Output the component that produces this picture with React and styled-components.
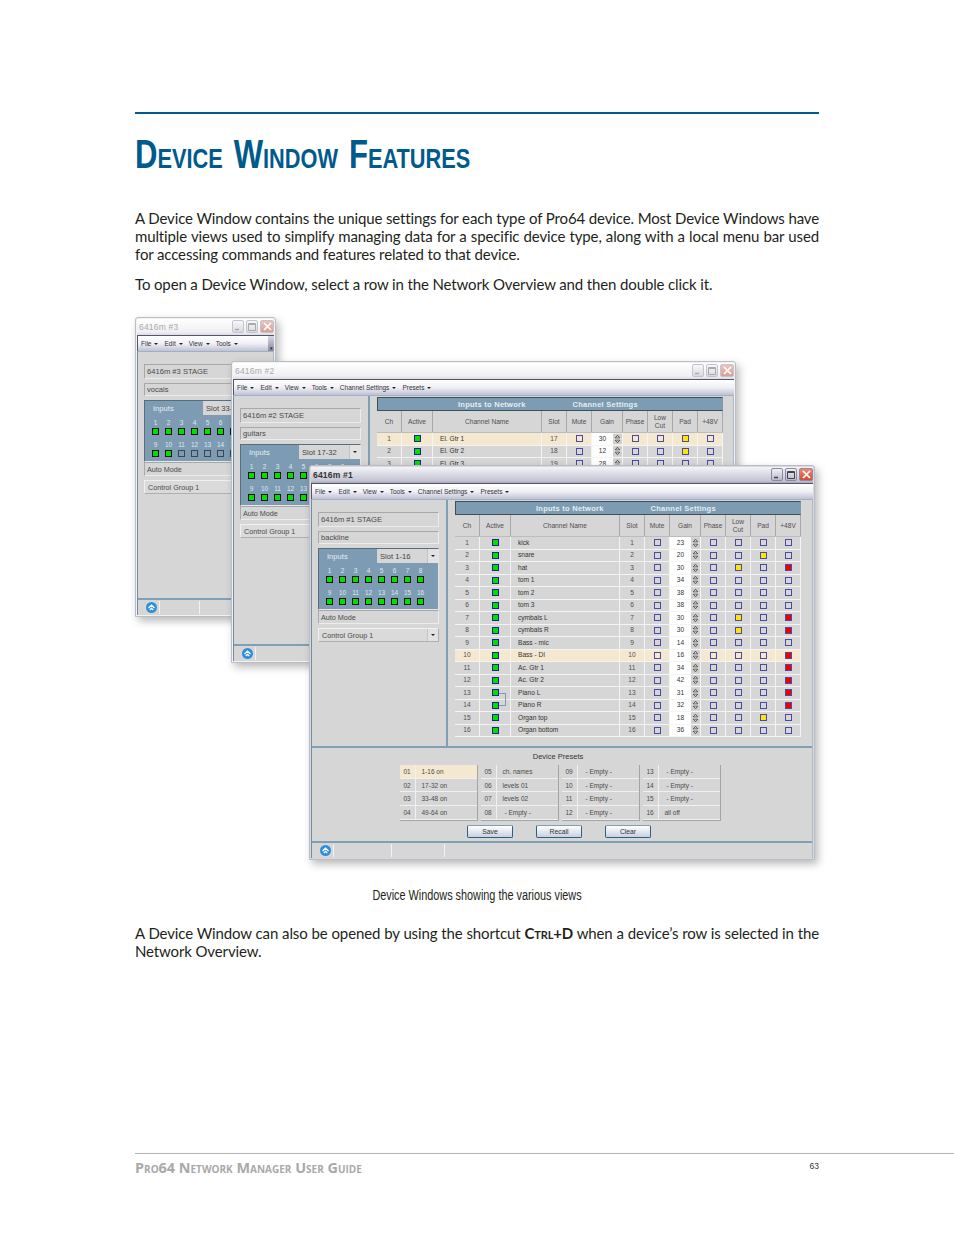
import React from 'react';
import styled, { createGlobalStyle } from 'styled-components';

const GlobalStyle = createGlobalStyle`
  html, body { margin: 0; padding: 0; background: #fff; }
  * { box-sizing: border-box; }
`

const Page = styled.div`
  width: 954px;
  height: 1235px;
  padding: 112px 0 0 135px;
  display: flex;
  flex-direction: column;
  overflow: hidden;
  font-family: "Lato", "Open Sans", sans-serif;
  color: #231f20;
`

const Rule = styled.div`
  width: 684px;
  height: 2px;
  background: #005a8c;
`

const Title = styled.h1`
  margin: 17px 0 32px;
  font-family: "Liberation Sans", sans-serif;
  font-variant: small-caps;
  font-weight: 700;
  font-size: 40px;
  line-height: 46px;
  color: #005a8c;
  word-spacing: 3px;
  white-space: nowrap;
  transform: scaleX(.777);
  transform-origin: left center;
`

const Para = styled.p`
  width: 684px;
  margin: 0 0 ${props => props.$after || 0}px;
  font-size: 15px;
  letter-spacing: -.13px;
  line-height: 18px;
  white-space: nowrap;
`

const FullLine = styled.span`
  display: block;
  text-align: justify;
  text-align-last: justify;
`

const Shortcut = styled.span`
  font-variant: small-caps;
  font-weight: 700;
`

const Desktop = styled.div`
  position: relative;
  height: 569px;
  margin-top: 24px;
`

const Caption = styled.div`
  width: 684px;
  text-align: center;
  font-family: "Liberation Sans", sans-serif;
  font-size: 14px;
  line-height: 18px;
  margin-bottom: 20px;
  transform: scaleX(.775);
`

const Footer = styled.div`
  margin-top: auto;
  margin-bottom: 57px;
  height: 25px;
  border-top: 1px solid #b4b4b4;
  display: flex;
  justify-content: space-between;
  padding: 5px 135px 0 0;
`

const FooterTitle = styled.div`
  font-family: "Open Sans", sans-serif;
  font-variant: small-caps;
  font-weight: 700;
  font-size: 14.4px;
  line-height: 18px;
  color: #a9a9a9;
`

const PageNo = styled.div`
  font-family: "Liberation Sans", sans-serif;
  font-size: 8.5px;
  line-height: 14px;
  color: #333;
`

/* device windows */
const Win = styled.div`
  position: absolute;
  left: ${props => props.$x}px;
  top: ${props => props.$y}px;
  width: ${props => props.$w}px;
  height: ${props => props.$h}px;
  display: flex;
  flex-direction: column;
  padding: 1px;
  background: ${props => props.$active ? '#d8d8de' : '#f2f2f4'};
  border: 1px solid #bcbcc4;
  border-radius: 3px 3px 0 0;
  box-shadow: 3px 4px 8px rgba(0, 0, 0, .28);
  overflow: hidden;
  font-family: "Liberation Sans", Arial, sans-serif;
  color: #4a4a4a;
`

const TitleBar = styled.div`
  flex: none;
  height: 16px;
  display: flex;
  align-items: center;
  justify-content: space-between;
  padding: 0 0 1px 2px;
  background: ${props => props.$active
    ? 'linear-gradient(#f4f4f8, #c4c4d4 85%, #a8a8bc)'
    : 'linear-gradient(#ffffff, #f0f0f4 80%, #dcdce4)'};
  font-size: 8.5px;
  font-weight: ${props => props.$active ? 700 : 400};
  color: ${props => props.$active ? '#333' : '#aaa'};
  letter-spacing: .2px;
`

const WinButtons = styled.div`
  display: flex;
  gap: 2px;
`

const WinButton = styled.div`
  width: ${props => props.$close ? 14 : 12}px;
  height: 13px;
  display: flex;
  align-items: center;
  justify-content: center;
  border: 1px solid ${props => props.$active ? '#8a8aa0' : '#c4c4cc'};
  border-radius: 2px;
  color: ${props => props.$close ? '#fff' : props.$active ? '#444' : '#aaa'};
  background: ${props => {
    if (props.$close) return props.$active ? 'linear-gradient(#f08a70, #d84a30)' : 'linear-gradient(#ecc4bc, #dc9c94)';
    return props.$active ? 'linear-gradient(#f0f0f6, #b8b8cc)' : 'linear-gradient(#f8f8fa, #d8d8e0)';
  }};
`

const MenuBar = styled.div`
  flex: none;
  height: 16px;
  display: flex;
  align-items: center;
  gap: 6px;
  padding-left: 3px;
  border-top: 1px solid #55556a;
  border-left: 1px solid #55556a;
  background: linear-gradient(#ffffff, #f0f0f6 50%, #c0c0d4);
  font-size: 6.5px;
  color: #333;
`

const Menu = styled.span`
  display: flex;
  align-items: center;
  gap: 3px;
  &::after {
    content: '';
    border-left: 2px solid transparent;
    border-right: 2px solid transparent;
    border-top: 2px solid #222;
  }
`

const MenuMore = styled.div`
  margin-left: auto;
  width: 6px;
  height: 100%;
  background: linear-gradient(#d8d8e4, #8888a0);
  color: #222;
  font-size: 5px;
  line-height: 24px;
  text-align: center;
`

const Body = styled.div`
  flex: 1;
  min-height: 0;
  display: flex;
  flex-direction: column;
  background: #d6d6d6;
  border-left: 1px solid #6f8ea5;
  border-right: 1px solid #a8bccb;
  border-top: 1px solid #9db2c2;
`

const Main = styled.div`
  flex: 1;
  min-height: 0;
  display: flex;
`

const Left = styled.div`
  flex: none;
  width: 134px;
  display: flex;
  flex-direction: column;
  padding: 12px 7px 0 6px;
`

const Field = styled.div`
  height: ${props => props.$h || 14}px;
  margin-bottom: ${props => props.$after || 0}px;
  display: flex;
  align-items: center;
  justify-content: space-between;
  padding-left: ${props => props.$pad || 2}px;
  background: ${props => props.$raised ? '#dadada' : '#d6d6d6'};
  border: 1px solid;
  border-color: ${props => props.$raised ? '#f0f0f0 #b0b0b0 #b0b0b0 #f0f0f0' : '#a8a8a8 #ececec #ececec #a8a8a8'};
  font-size: ${props => props.$size || 7.6}px;
`

const Arrow = styled.div`
  flex: none;
  width: 11px;
  height: 100%;
  display: flex;
  align-items: center;
  justify-content: center;
  background: #e2e2e2;
  border-left: 1px solid #c4c4c4;
  &::after {
    content: '';
    border-left: 2px solid transparent;
    border-right: 2px solid transparent;
    border-top: 2px solid #222;
  }
`

const InputsPanel = styled.div`
  height: 62px;
  background: #7d9cb3;
  border: 1px solid #586e7e;
  border-right-color: #e6e6e6;
  border-bottom-color: #e6e6e6;
`

const InputsHead = styled.div`
  height: 14px;
  display: flex;
  align-items: center;
  justify-content: space-between;
`

const InputsLabel = styled.span`
  padding-left: 8px;
  font-size: 7.6px;
  color: #e4ecf2;
`

const SlotSelect = styled.div`
  width: 61px;
  height: 100%;
  display: flex;
  align-items: center;
  justify-content: space-between;
  padding-left: 3px;
  background: #d6d6d6;
  font-size: 7.6px;
  color: #444;
`

const InputGrid = styled.div`
  display: grid;
  grid-template-columns: repeat(8, 13px);
  grid-template-rows: 9px 9px 4px 9px 9px;
  padding: 3px 0 0 4px;
  justify-items: center;
  align-items: center;
`

const InputNo = styled.span`
  font-size: 6.5px;
  line-height: 8px;
  color: #dfe7ec;
`

const Led = styled.span`
  display: block;
  width: 7px;
  height: 7px;
  background: ${props => props.$on ? '#00e000' : '#7d9cb3'};
  border: 1px solid ${props => props.$on ? '#111' : '#39454f'};
`

const Divider = styled.div`
  flex: none;
  width: 2px;
  background: #7f9fb5;
`

const Right = styled.div`
  flex: 1;
  min-width: 0;
  padding: 1px 0 0 7px;
`

const TableBand = styled.div`
  width: 346px;
  height: 14px;
  display: flex;
  align-items: center;
  gap: 47px;
  padding-left: 80px;
  background: #7d9cb3;
  border: 1px solid #3f4f5a;
  border-right-color: #7d9cb3;
  font-size: 7.5px;
  font-weight: 700;
  letter-spacing: .25px;
  color: #e6edf2;
`

const ChannelGrid = styled.div`
  display: grid;
  width: 346px;
  grid-template-columns: 25px 31px 109px 25px 25px 31px 25px 25px 25px 25px;
  background: ${props => props.$selected ? '#f5e8d0' : 'transparent'};
  height: ${props => props.$head ? 22 : 12.5}px;
  border-bottom: 1px solid ${props => props.$head ? '#bdbdbd' : '#f4f4f4'};
`

const Cell = styled.div`
  position: relative;
  display: flex;
  align-items: center;
  justify-content: ${props => props.$left ? 'flex-start' : 'center'};
  padding-left: ${props => props.$left ? 7 : 0}px;
  border-right: 1px solid ${props => props.$head ? '#a8a8a8' : '#f4f4f4'};
  font-size: 6.6px;
  line-height: 8px;
  text-align: center;
  color: ${props => props.$name ? '#333' : '#4f4f4f'};
`

const Check = styled.span`
  display: block;
  width: 7px;
  height: 7px;
  background: ${props => props.$color || 'transparent'};
  border: 1px solid ${props => props.$color === '#00e000' ? '#20208a' : '#4a4aa0'};
`

const GainBox = styled.div`
  width: 100%;
  height: 100%;
  display: flex;
  align-items: center;
`

const GainValue = styled.span`
  width: 21px;
  height: 100%;
  display: flex;
  align-items: center;
  justify-content: center;
  background: #fff;
  color: #333;
`

const Spinner = styled.svg`
  flex: none;
  width: 9px;
  height: 10px;
  background: #cfcfcf;
  border-radius: 1px;
`

const Link = styled.div`
  position: absolute;
  left: 19px;
  top: 6px;
  width: 7px;
  height: 13px;
  border: 1px solid #7d9cb3;
  border-left: none;
  z-index: 2;
`

const Presets = styled.div`
  flex: none;
  height: 95px;
  display: flex;
  flex-direction: column;
  align-items: center;
  border-top: 2px solid #7f9fb5;
`

const PresetTitle = styled.div`
  height: 17px;
  padding-top: 3px;
  margin-left: -8px;
  font-size: 7.5px;
  line-height: 12px;
  color: #333;
`

const PresetCols = styled.div`
  display: flex;
  gap: 3px;
  margin-left: -4px;
`

const PresetCol = styled.div`
  width: 78px;
  border-right: 1px solid #a4a4a4;
  border-bottom: 1px solid #a4a4a4;
`

const PresetRow = styled.div`
  height: 13.7px;
  display: flex;
  align-items: center;
  background: ${props => props.$selected ? '#f5e8d0' : 'transparent'};
  border-bottom: 1px solid #f0f0f0;
  font-size: 6.5px;
  color: #4a4a4a;
`

const PresetNo = styled.span`
  flex: none;
  width: 16px;
  height: 100%;
  display: flex;
  align-items: center;
  justify-content: center;
  border-right: 1px solid #f0f0f0;
`

const PresetName = styled.span`
  padding-left: ${props => props.$empty ? 8 : 6}px;
`

const ButtonRow = styled.div`
  display: flex;
  gap: 23px;
  margin-top: 4px;
  margin-left: -6px;
`

const Button = styled.div`
  width: 46px;
  height: 13px;
  display: flex;
  align-items: center;
  justify-content: center;
  border: 1px solid #2f6084;
  border-top-color: #7f9fb5;
  border-radius: 2px;
  background: linear-gradient(#ffffff, #c8d0e0);
  font-size: 6.8px;
  color: #333;
`

const StatusBar = styled.div`
  flex: none;
  height: 17px;
  display: flex;
  align-items: center;
  padding-left: 8px;
  border-top: 2px solid #7f9fb5;
`

const StatusIcon = styled.svg`
  flex: none;
  width: 11px;
  height: 11px;
`

const StatusCell = styled.div`
  width: ${props => props.$w}px;
  height: 13px;
  margin-left: ${props => props.$first ? 2 : 0}px;
  border-left: 1px solid #f2f2f2;
`

const W1_ROWS = [
  ['kick', 23, 0, 0, 0],
  ['snare', 20, 0, 1, 0],
  ['hat', 30, 1, 0, 1],
  ['tom 1', 34, 0, 0, 0],
  ['tom 2', 38, 0, 0, 0],
  ['tom 3', 38, 0, 0, 0],
  ['cymbals L', 30, 1, 0, 1],
  ['cymbals R', 30, 1, 0, 1],
  ['Bass - mic', 14, 0, 0, 0],
  ['Bass - DI', 16, 0, 0, 1],
  ['Ac. Gtr 1', 34, 0, 0, 1],
  ['Ac. Gtr 2', 42, 0, 0, 1],
  ['Piano L', 31, 0, 0, 1],
  ['Piano R', 32, 0, 0, 1],
  ['Organ top', 18, 0, 1, 0],
  ['Organ bottom', 36, 0, 0, 0],
]

const W2_ROWS = [
  ['El. Gtr 1', 30, 0, 1, 0],
  ['El. Gtr 2', 12, 0, 1, 0],
  ['El. Gtr 3', 28, 0, 0, 0],
]

const HEADS = ['Ch', 'Active', 'Channel Name', 'Slot', 'Mute', 'Gain', 'Phase', 'Low Cut', 'Pad', '+48V']

const PRESETS = [
  [['01', '1-16 on'], ['02', '17-32 on'], ['03', '33-48 on'], ['04', '49-64 on']],
  [['05', 'ch. names'], ['06', 'levels 01'], ['07', 'levels 02'], ['08', '- Empty -']],
  [['09', '- Empty -'], ['10', '- Empty -'], ['11', '- Empty -'], ['12', '- Empty -']],
  [['13', '- Empty -'], ['14', '- Empty -'], ['15', '- Empty -'], ['16', 'all off']],
]

const Spin = () => (
  <Spinner viewBox="0 0 9 10">
    <path d="M4.5 1.2 6.8 4H2.2zM4.5 8.8 2.2 6h4.6z" fill="none" stroke="#444" strokeWidth=".8" />
    <path d="M0 5h9" stroke="#f4f4f4" strokeWidth=".6" />
  </Spinner>
)

const WindowButtons = ({ active }) => (
  <WinButtons>
    <WinButton $active={active}>
      <svg width="8" height="8" viewBox="0 0 8 8"><path d="M1 6.5h4" stroke="currentColor" strokeWidth="1.5" /></svg>
    </WinButton>
    <WinButton $active={active}>
      <svg width="8" height="8" viewBox="0 0 8 8"><path d="M.5.5h7v7h-7zM.5 1.5h7" fill="none" stroke="currentColor" /></svg>
    </WinButton>
    <WinButton $active={active} $close>
      <svg width="9" height="9" viewBox="0 0 9 9"><path d="M1 1l7 7M8 1 1 8" stroke="currentColor" strokeWidth="1.7" /></svg>
    </WinButton>
  </WinButtons>
)

const InputsBlock = ({ slot, lit, label, control, arrow }) => {
  const nums = Array.from({ length: 16 }, (_, i) => i + 1)
  const top = nums.slice(0, 8)
  const bottom = nums.slice(8)
  return (
    <>
      <Field $h={15} $after={4}>{label}</Field>
      <Field $h={13} $after={4}>{control}</Field>
      <InputsPanel>
        <InputsHead>
          <InputsLabel>Inputs</InputsLabel>
          <SlotSelect>{slot}<Arrow /></SlotSelect>
        </InputsHead>
        <InputGrid>
          {top.map(n => <InputNo key={n}>{n}</InputNo>)}
          {top.map(n => <Led key={n} $on={n <= lit} />)}
          {top.map(n => <span key={n} />)}
          {bottom.map(n => <InputNo key={n}>{n}</InputNo>)}
          {bottom.map(n => <Led key={n} $on={n <= lit} />)}
        </InputGrid>
      </InputsPanel>
      <Field $h={14} $after={4} $size={7.2}>Auto Mode</Field>
      <Field $h={14} $raised $pad={3} $size={7.2}>Control Group 1{arrow && <Arrow />}</Field>
    </>
  )
}

const Channels = ({ rows, firstSlot, selected, linked }) => (
  <Right>
    <TableBand><span>Inputs to Network</span><span>Channel Settings</span></TableBand>
    <ChannelGrid $head>
      {HEADS.map(h => <Cell key={h} $head>{h}</Cell>)}
    </ChannelGrid>
    {rows.map(([name, gain, low, pad, phantom], i) => (
      <ChannelGrid key={name} $selected={i + 1 === selected}>
        <Cell>{i + 1}</Cell>
        <Cell><Check $color="#00e000" />{linked && i === 12 && <Link />}</Cell>
        <Cell $left $name>{name}</Cell>
        <Cell>{firstSlot + i}</Cell>
        <Cell><Check /></Cell>
        <Cell><GainBox><GainValue>{gain}</GainValue><Spin /></GainBox></Cell>
        <Cell><Check /></Cell>
        <Cell><Check $color={low ? '#ffe600' : undefined} /></Cell>
        <Cell><Check $color={pad ? '#ffe600' : undefined} /></Cell>
        <Cell><Check $color={phantom ? '#f00000' : undefined} /></Cell>
      </ChannelGrid>
    ))}
  </Right>
)

const PresetsPanel = () => (
  <Presets>
    <PresetTitle>Device Presets</PresetTitle>
    <PresetCols>
      {PRESETS.map((col, c) => (
        <PresetCol key={c}>
          {col.map(([no, name]) => (
            <PresetRow key={no} $selected={no === '01'}>
              <PresetNo>{no}</PresetNo>
              <PresetName $empty={name.startsWith('-')}>{name}</PresetName>
            </PresetRow>
          ))}
        </PresetCol>
      ))}
    </PresetCols>
    <ButtonRow>
      <Button>Save</Button>
      <Button>Recall</Button>
      <Button>Clear</Button>
    </ButtonRow>
  </Presets>
)

const Status = () => (
  <StatusBar>
    <StatusIcon viewBox="0 0 11 11">
      <circle cx="5.5" cy="5.5" r="5.5" fill="#2d8fdc" />
      <path d="M2.5 6 5.5 3.2 8.5 6M3.8 8 5.5 6.4 7.2 8" fill="none" stroke="#fff" strokeWidth="1.3" />
    </StatusIcon>
    <StatusCell $first $w={58} />
    <StatusCell $w={53} />
    <StatusCell $w={53} />
  </StatusBar>
)

const DeviceWindow = ({ x, y, w, h, title, active, menus, more, children }) => (
  <Win $x={x} $y={y} $w={w} $h={h} $active={active}>
    <TitleBar $active={active}>
      {title}
      <WindowButtons active={active} />
    </TitleBar>
    <MenuBar>
      {menus.map(m => <Menu key={m}>{m}</Menu>)}
      {more && <MenuMore>▾</MenuMore>}
    </MenuBar>
    <Body>{children}</Body>
  </Win>
)

const BASE_MENUS = ['File', 'Edit', 'View', 'Tools']
const FULL_MENUS = [...BASE_MENUS, 'Channel Settings', 'Presets']

export default function App() {
  return (
    <Page>
      <GlobalStyle />
      <Rule />
      <Title>Device Window Features</Title>
      <Para $after={12}>
        <FullLine>A Device Window contains the unique settings for each type of Pro64 device. Most Device Windows have</FullLine>
        <FullLine>multiple views used to simplify managing data for a specific device type, along with a local menu bar used</FullLine>
        for accessing commands and features related to that device.
      </Para>
      <Para>To open a Device Window, select a row in the Network Overview and then double click it.</Para>
      <Desktop>
        <DeviceWindow x={0} y={0} w={141} h={300} title="6416m #3" menus={BASE_MENUS} more>
          <Main>
            <Left>
              <InputsBlock label="6416m #3 STAGE" control="vocals" slot="Slot 33-48" lit={10} />
            </Left>
          </Main>
          <Status />
        </DeviceWindow>
        <DeviceWindow x={96} y={44} w={505} h={302} title="6416m #2" menus={FULL_MENUS}>
          <Main>
            <Left>
              <InputsBlock label="6416m #2 STAGE" control="guitars" slot="Slot 17-32" lit={16} />
            </Left>
            <Divider />
            <Channels rows={W2_ROWS} firstSlot={17} selected={1} />
          </Main>
          <Status />
        </DeviceWindow>
        <DeviceWindow x={174} y={148} w={506} h={395} title="6416m #1" menus={FULL_MENUS} active>
          <Main>
            <Left>
              <InputsBlock label="6416m #1 STAGE" control="backline" slot="Slot 1-16" lit={16} arrow />
            </Left>
            <Divider />
            <Channels rows={W1_ROWS} firstSlot={1} selected={10} linked />
          </Main>
          <PresetsPanel />
          <Status />
        </DeviceWindow>
      </Desktop>
      <Caption>Device Windows showing the various views</Caption>
      <Para>
        <FullLine>A Device Window can also be opened by using the shortcut <Shortcut>Ctrl+D</Shortcut> when a device’s row is selected in the</FullLine>
        Network Overview.
      </Para>
      <Footer>
        <FooterTitle>Pro64 Network Manager User Guide</FooterTitle>
        <PageNo>63</PageNo>
      </Footer>
    </Page>
  )
}
